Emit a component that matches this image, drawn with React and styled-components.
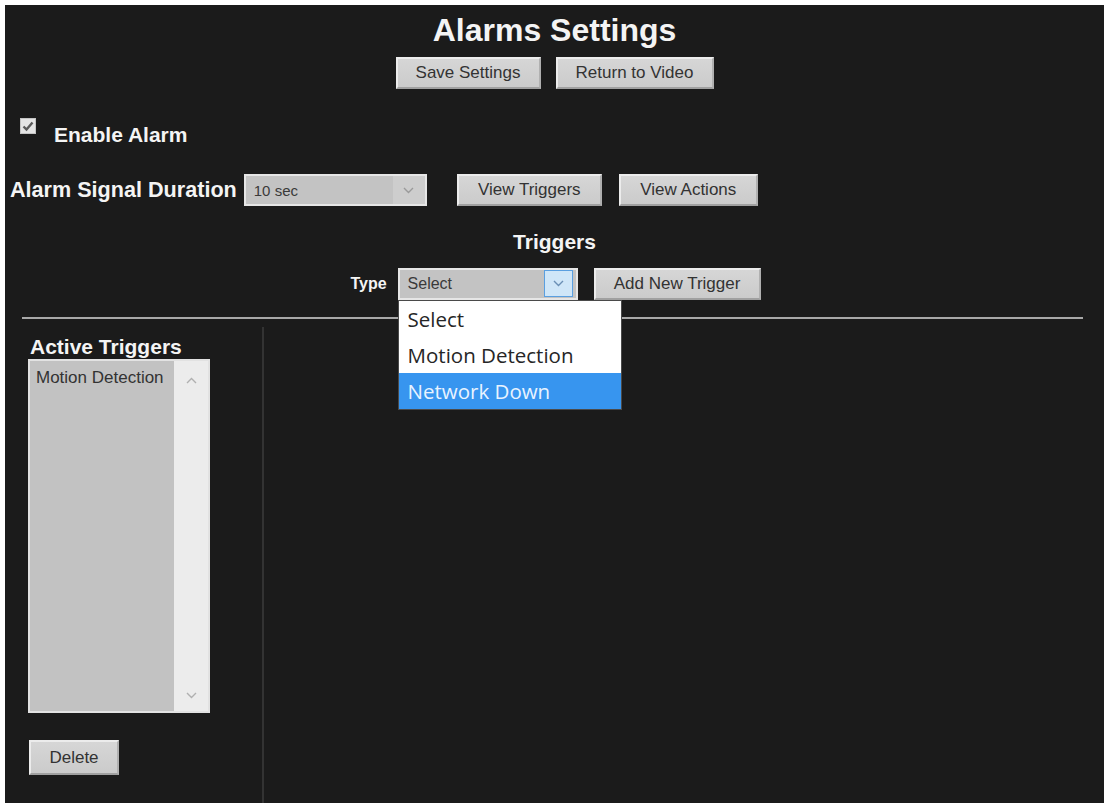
import React from "react";
import styled, { createGlobalStyle } from "styled-components";

const GlobalStyle = createGlobalStyle`
  html, body {
    margin: 0;
    padding: 0;
    background: #ffffff;
  }
  body {
    font-family: "Liberation Sans", Arial, sans-serif;
  }
`;

const Panel = styled.div`
  margin: 5px 5px 0 5px;
  min-height: 798px;
  box-sizing: border-box;
  padding-top: 7px;
  background: #1b1b1b;
  color: #f4f4f4;
  display: flex;
  flex-direction: column;
`;

const Title = styled.h1`
  margin: 0;
  text-align: center;
  font-size: 32px;
  line-height: 36px;
  font-weight: 700;
`;

const ButtonRow = styled.div`
  display: flex;
  justify-content: center;
  gap: 15px;
  margin-top: 9px;
`;

const Button = styled.button`
  box-sizing: border-box;
  width: ${(p) => p.$w}px;
  height: ${(p) => p.$h || 32}px;
  margin-left: ${(p) => p.$ml || 0}px;
  padding: 0;
  font-family: "Liberation Sans", Arial, sans-serif;
  font-size: 17px;
  color: #333;
  background: linear-gradient(#d6d6d6, #cbcbcb);
  border: 2px solid;
  border-color: #ececec #b0b0b0 #a0a0a0 #ececec;
  cursor: pointer;
`;

const CheckRow = styled.div`
  display: flex;
  align-items: flex-start;
  gap: 18px;
  margin-top: 29px;
  padding-left: 15px;
`;

const CheckBox = styled.span`
  width: 16px;
  height: 16px;
  background: #e4e4e4;
  border: 1px solid #c4c4c4;
  box-sizing: border-box;
  display: flex;
  align-items: center;
  justify-content: center;
`;

const Label = styled.span`
  font-size: ${(p) => p.$size || 21}px;
  line-height: 24px;
  font-weight: 700;
  margin-top: ${(p) => p.$mt || 0}px;
  color: #f4f4f4;
`;

const FieldRow = styled.div`
  display: flex;
  align-items: center;
  margin-top: 27px;
  padding-left: 5px;
  gap: 7px;
`;

const SelectBox = styled.div`
  position: relative;
  box-sizing: border-box;
  width: ${(p) => p.$w}px;
  height: 32px;
  display: flex;
  align-items: stretch;
  background: #c3c3c3;
  border: 2px solid #e6e6e6;
`;

const SelectText = styled.span`
  flex: 1;
  display: flex;
  align-items: center;
  padding-left: 8px;
  font-size: ${(p) => p.$size || 15}px;
  color: #3a3a3a;
`;

const ArrowBox = styled.span`
  width: ${(p) => (p.$active ? 29 : 32)}px;
  margin: ${(p) => (p.$active ? "0 3px 1px 0" : "0")};
  display: flex;
  align-items: center;
  justify-content: center;
  box-sizing: border-box;
  background: ${(p) => (p.$active ? "#cfe6f8" : "#cdcdcd")};
  border: ${(p) => (p.$active ? "1px solid #5a9fe0" : "none")};
`;

const SectionTitle = styled.div`
  margin-top: 24px;
  text-align: center;
  font-size: 21px;
  line-height: 24px;
  font-weight: 700;
`;

const TypeRow = styled.div`
  display: flex;
  justify-content: center;
  align-items: center;
  margin-top: 14px;
  padding-left: 2px;
`;

const Menu = styled.ul`
  position: absolute;
  top: 30px;
  left: -2px;
  width: 224px;
  margin: 0;
  padding: 0;
  list-style: none;
  background: #ffffff;
  border: 1px solid #4a4a4a;
  box-sizing: border-box;
  z-index: 2;
`;

const MenuItem = styled.li`
  height: 36px;
  display: flex;
  align-items: center;
  padding-left: 9px;
  font-family: "Open Sans", "Noto Sans", sans-serif;
  font-size: 20.5px;
  color: ${(p) => (p.$active ? "#e8f3ff" : "#262626")};
  background: ${(p) => (p.$active ? "#3795ef" : "transparent")};
`;

const Rule = styled.div`
  height: 2px;
  margin: 17px 21px 0 17px;
  background: #a8a8a8;
`;

const Lower = styled.div`
  flex: 1;
  display: flex;
  margin-top: 8px;
`;

const SideColumn = styled.div`
  width: 259px;
  box-sizing: border-box;
  padding: 8px 0 0 23px;
  border-right: 2px solid #333333;
  display: flex;
  flex-direction: column;
  align-items: flex-start;
`;

const ListBox = styled.div`
  width: 182px;
  height: 354px;
  box-sizing: border-box;
  display: flex;
  border: 2px solid #e2e2e2;
`;

const ListItems = styled.div`
  flex: 1;
  background: #c2c2c2;
  padding: 7px 0 0 6px;
  font-size: 17px;
  color: #333;
`;

const ScrollTrack = styled.div`
  width: 34px;
  background: #ececec;
  display: flex;
  flex-direction: column;
  justify-content: space-between;
  align-items: center;
  padding: 16px 0 12px;
`;

const Chevron = ({ up, color = "#8a8a8a", w = 11 }) => (
  <svg width={w} height="7" viewBox="0 0 11 7">
    <path
      d={up ? "M1 6 L5.5 1.5 L10 6" : "M1 1 L5.5 5.5 L10 1"}
      fill="none"
      stroke={color}
      strokeWidth="1.4"
    />
  </svg>
);

const App = () => {
  const options = ["Select", "Motion Detection", "Network Down"];
  return (
    <>
      <GlobalStyle />
      <Panel>
        <Title>Alarms Settings</Title>
        <ButtonRow>
          <Button $w={145}>Save Settings</Button>
          <Button $w={158}>Return to Video</Button>
        </ButtonRow>

        <CheckRow>
          <CheckBox>
            <svg width="12" height="11" viewBox="0 0 12 11">
              <path d="M1.5 5.5 L4.5 8.5 L10.5 1.5" fill="none" stroke="#5a5a5a" strokeWidth="2.4" />
            </svg>
          </CheckBox>
          <Label $mt={5}>Enable Alarm</Label>
        </CheckRow>

        <FieldRow>
          <Label $size={21.6}>Alarm Signal Duration</Label>
          <SelectBox $w={183}>
            <SelectText>10 sec</SelectText>
            <ArrowBox>
              <Chevron color="#9a9a9a" />
            </ArrowBox>
          </SelectBox>
          <Button $w={145} $ml={23}>View Triggers</Button>
          <Button $w={139} $ml={10}>View Actions</Button>
        </FieldRow>

        <SectionTitle>Triggers</SectionTitle>
        <TypeRow>
          <Label $size={16}>Type</Label>
          <SelectBox $w={180} style={{ marginLeft: 11, marginRight: 16 }}>
            <SelectText $size={16}>Select</SelectText>
            <ArrowBox $active>
              <Chevron color="#6a8fb5" w={13} />
            </ArrowBox>
            <Menu>
              {options.map((o) => (
                <MenuItem key={o} $active={o === "Network Down"}>
                  {o}
                </MenuItem>
              ))}
            </Menu>
          </SelectBox>
          <Button $w={167}>Add New Trigger</Button>
        </TypeRow>

        <Rule />

        <Lower>
          <SideColumn>
            <Label style={{ marginLeft: 2 }}>Active Triggers</Label>
            <ListBox>
              <ListItems>Motion Detection</ListItems>
              <ScrollTrack>
                <Chevron up color="#b0b0b0" />
                <Chevron color="#b0b0b0" />
              </ScrollTrack>
            </ListBox>
            <Button $w={90} $h={35} style={{ marginTop: 27, marginLeft: 1 }}>
              Delete
            </Button>
          </SideColumn>
        </Lower>
      </Panel>
    </>
  );
};

export default App;
